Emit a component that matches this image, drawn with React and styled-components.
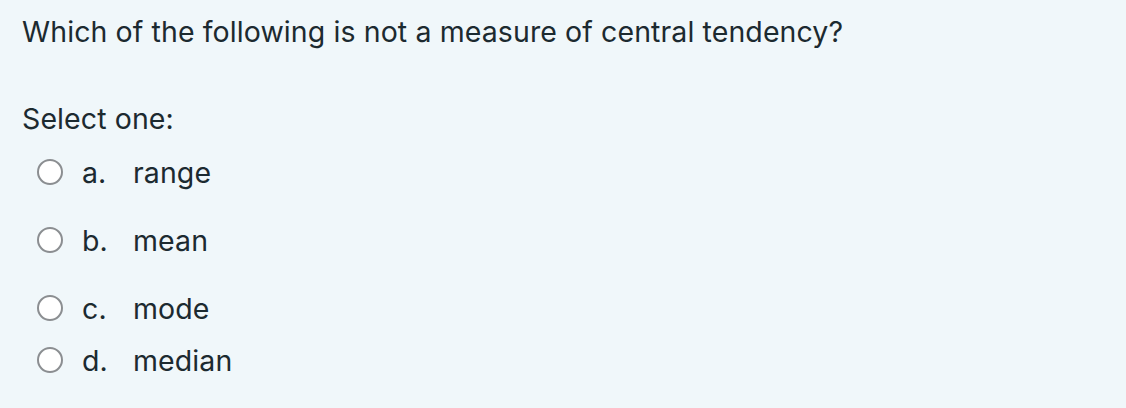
import React from "react";
import styled, { createGlobalStyle } from "styled-components";

const GlobalStyle = createGlobalStyle`
  html, body {
    margin: 0;
    padding: 0;
    background: #f0f7fa;
  }
  body {
    font-family: Inter, "Noto Sans", sans-serif;
    color: #1c2a30;
  }
`;

const options = [
  { letter: "a.", text: "range", gap: 68 },
  { letter: "b.", text: "mean", gap: 68 },
  { letter: "c.", text: "mode", gap: 52 },
  { letter: "d.", text: "median", gap: 0 },
];

const Question = () => {
  return (
    <Card>
      <QText>Which of the following is not a measure of central tendency?</QText>
      <Prompt>Select one:</Prompt>
      <Answers>
        {options.map((o) => (
          <Option key={o.letter} $gap={o.gap}>
            <Radio />
            <Letter>{o.letter}</Letter>
            <Label>{o.text}</Label>
          </Option>
        ))}
      </Answers>
    </Card>
  );
};

const Card = styled.div`
  width: 1126px;
  height: 408px;
  box-sizing: border-box;
  padding: 13px 22px 0;
  background: #f0f7fa;
  font-size: 28.5px;
  letter-spacing: 0.1px;
`;

const QText = styled.div`
  line-height: 38px;
`;

const Prompt = styled.div`
  margin-top: 49px;
  line-height: 38px;
`;

const Answers = styled.div`
  margin-top: 17px;
  display: flex;
  flex-direction: column;
`;

const Option = styled.div`
  display: flex;
  align-items: center;
  height: 34px;
  margin-bottom: ${(p) => p.$gap - 34}px;
  padding-left: 15px;
`;

const Radio = styled.span`
  width: 22px;
  height: 22px;
  border-radius: 50%;
  border: 2px solid #8b8e91;
  background: #fff;
  flex-shrink: 0;
`;

const Letter = styled.span`
  margin-left: 19px;
  width: 51px;
`;

const Label = styled.span``;

export default function App() {
  return (
    <>
      <GlobalStyle />
      <Question />
    </>
  );
}
